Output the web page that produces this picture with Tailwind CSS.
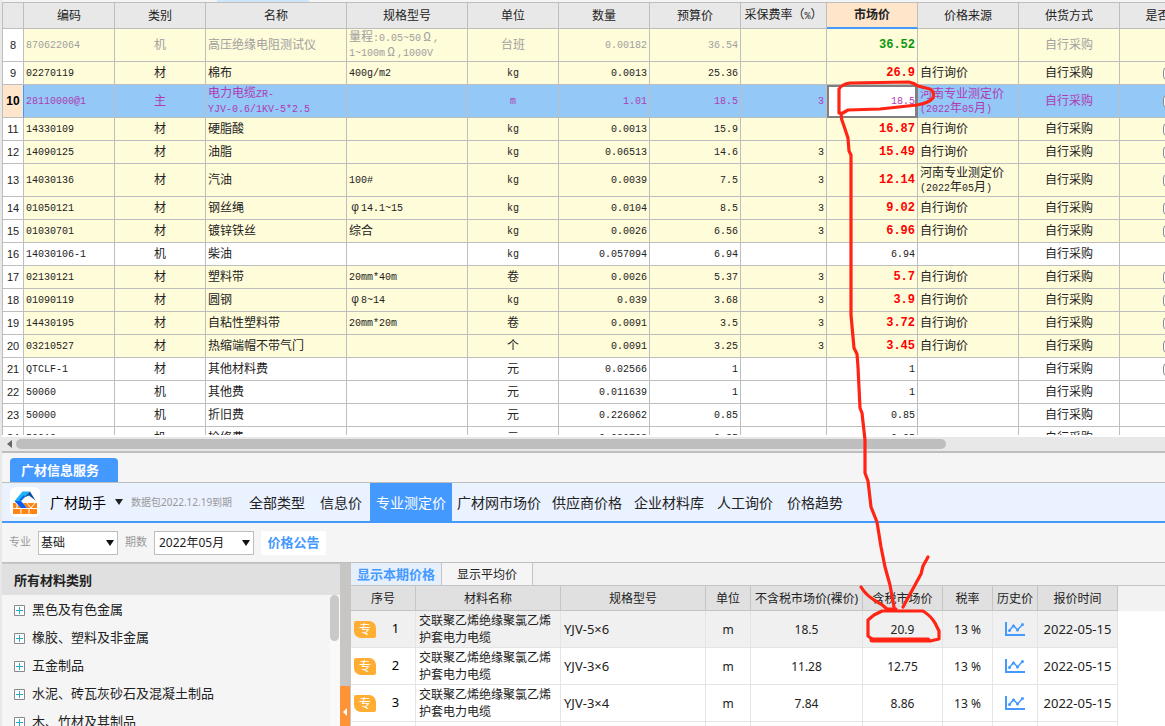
<!DOCTYPE html>
<html lang="zh-CN">
<head>
<meta charset="utf-8">
<title>广材信息服务</title>
<script src="https://cdn.jsdelivr.net/npm/@tailwindcss/browser@4"></script>
</head>
<body class="relative flex h-screen flex-col overflow-hidden bg-[#e8e8e8] pl-[2px] font-['Noto_Sans','Noto_Sans_CJK_SC',sans-serif] text-[#222]">

<div class="flex h-[2px] shrink-0 bg-[#f4f4f4]"><span class="ml-[215px] w-[92px] bg-[#cce6fb]"></span></div>

<main class="h-[433px] shrink-0 overflow-hidden bg-white font-['Liberation_Mono','Noto_Sans_CJK_SC',monospace] text-[12px] leading-[14px]">
  <table class="w-[1218px] table-fixed border-separate border-spacing-0 border-l border-t border-[#bebebe]">
    <colgroup>
      <col class="w-[21px]"><col class="w-[91px]"><col class="w-[91px]"><col class="w-[141px]"><col class="w-[121px]"><col class="w-[91px]"><col class="w-[91px]"><col class="w-[91px]"><col class="w-[86px]"><col class="w-[91px]"><col class="w-[101px]"><col class="w-[101px]"><col class="w-[100px]">
    </colgroup>
    <thead><tr id="head" class="h-[26px] bg-[#e8e8e8]"></tr></thead>
    <tbody id="grid"></tbody>
  </table>
</main>

<div class="flex h-[16px] shrink-0 items-center border-t-2 border-white bg-[#e8e8e8]">
  <button aria-label="向左滚动" class="flex w-[14px] justify-center"><svg class="h-[8px] w-[5px]" viewBox="0 0 5 8"><path d="M5 0v8L0 4z" fill="#666"/></svg></button>
  <span class="h-[10px] w-[80%] rounded-full bg-[#bebebe]"></span>
</div>

<section class="flex min-h-0 flex-1 flex-col border-t-2 border-[#bebebe] bg-[#f5f5f5]">
  <div class="flex h-[30px] shrink-0 items-end border-b border-[#bebebe] pl-2">
    <button class="h-6 w-[108px] rounded-t-sm bg-[#4499ff] pr-2 text-center text-[13px] font-bold leading-6 text-white">广材信息服务</button>
  </div>

  <nav class="flex h-10 shrink-0 items-center border-b-2 border-[#4499ff] bg-[#eaf1ff] pl-2 text-[14px]">
    <span class="flex h-[30px] w-[30px] items-center justify-center rounded-md bg-white">
      <svg class="h-[26px] w-[26px]" viewBox="0 0 26 26">
        <path d="M1 14h24v11H1z" fill="#ff8412"/>
        <path d="M1 19.500h24M9 19.500V25M17 19.500V25M5 14v5.500M15 14l4 5 4-5" stroke="#fff" fill="none"/>
        <path d="M10 2h10l5 9-1 2-6-6-5 1-4 4 6 7-4 1-9-7z" fill="#fff"/>
        <path d="M10.500 2.500H18L9 12H2.500z" fill="#1fb2fa"/>
        <path d="M2.500 12H9l6 7H9z" fill="#0a5df0"/>
        <path d="M12 8.500l6-6 5.500 9-6.500-5z" fill="#0b4f9c"/>
        <path d="M7 11l5-5 1 2-4 4z" fill="#0c6fd8"/>
      </svg>
    </span>
    <button class="ml-[10px] flex items-center gap-[9px] whitespace-nowrap text-black">广材助手<svg class="h-[6px] w-[8px]" viewBox="0 0 8 6"><path d="M0 0h8L4 6z" fill="#222"/></svg></button>
    <span class="ml-2 w-[116px] whitespace-nowrap text-[10px] text-[#999]">数据包2022.12.19到期</span>
    <div class="flex h-full items-center whitespace-nowrap">
      <a href="#" class="w-[71px] pl-[2px]">全部类型</a>
      <a href="#" class="w-[52px] pl-[2px]">信息价</a>
      <a href="#" class="flex h-full w-[82px] items-center justify-center bg-[#4499ff] text-white">专业测定价</a>
      <a href="#" class="ml-[5px]">广材网市场价</a>
      <a href="#" class="ml-[11px]">供应商价格</a>
      <a href="#" class="ml-3">企业材料库</a>
      <a href="#" class="ml-[13px]">人工询价</a>
      <a href="#" class="ml-[14px]">价格趋势</a>
    </div>
  </nav>

  <form class="flex h-10 shrink-0 items-center border-b border-[#bebebe] pl-[7px] text-[12px]">
    <label for="major" class="text-[11px] text-[#999]">专业</label>
    <div class="relative ml-[7px]">
      <select id="major" class="h-6 w-20 appearance-none border border-[#bebebe] bg-white pl-[2px] text-[12px] leading-4"><option>基础</option></select>
      <svg class="pointer-events-none absolute right-1 top-[9px] h-[6px] w-[8px]" viewBox="0 0 8 6"><path d="M0 0h8L4 6z" fill="#111"/></svg>
    </div>
    <label for="period" class="ml-[7px] text-[11px] text-[#999]">期数</label>
    <div class="relative ml-[7px]">
      <select id="period" class="h-6 w-[100px] appearance-none border border-[#bebebe] bg-white pl-1 text-[12px] leading-4"><option>2022年05月</option></select>
      <svg class="pointer-events-none absolute right-1 top-[9px] h-[6px] w-[8px]" viewBox="0 0 8 6"><path d="M0 0h8L4 6z" fill="#111"/></svg>
    </div>
    <button type="button" class="ml-[7px] h-6 w-[65px] bg-white text-[13px] font-bold text-[#4499ff]">价格公告</button>
  </form>

  <div class="flex min-h-0 flex-1">
    <aside class="flex w-[338px] shrink-0 flex-col overflow-hidden">
      <h2 class="h-8 shrink-0 border-t border-[#c8c8c8] bg-[#e0e0e0] pl-3 text-[13px] font-bold leading-8">所有材料类别</h2>
      <div class="flex min-h-0 flex-1 justify-between">
        <ul id="tree" class="pl-3 pt-px text-[13px]"></ul>
        <span class="w-[10px] bg-[#f9f9f9]"><span class="block h-[46px] w-[9px] rounded-full bg-[#c9c9c9]"></span></span>
      </div>
    </aside>
    <div class="w-[11px] shrink-0 overflow-hidden bg-[#c8c6c4] pt-[123px]">
      <button aria-label="收起" class="flex h-[60px] w-[10px] items-center justify-center bg-[#ff9436] pb-2"><svg class="h-[8px] w-[4px]" viewBox="0 0 4 8"><path d="M4 0v8L0 4z" fill="#fff"/></svg></button>
    </div>
    <div class="min-w-0 flex-1 overflow-hidden bg-white text-[12px]">
      <div class="flex h-[23px] border-b border-[#c4c4c4] bg-[#f1f1f1]">
        <button class="w-[91px] border-r border-[#c4c4c4] bg-[#e6f0fd] text-[13px] font-bold leading-5 text-[#4499ff]">显示本期价格</button>
        <button class="w-[91px] border-r border-[#c4c4c4] bg-[#f5f5f5] pt-[2px] leading-5">显示平均价</button>
      </div>
      <div class="bg-[linear-gradient(#f2f2f2_25px,#fff_25px)]">
        <table class="w-[767px] table-fixed border-separate border-spacing-0 text-center">
          <colgroup><col class="w-[65px]"><col class="w-[145px]"><col class="w-[145px]"><col class="w-[45px]"><col class="w-[112px]"><col class="w-[80px]"><col class="w-[50px]"><col class="w-[45px]"><col class="w-[80px]"></colgroup>
          <thead><tr id="priceHead" class="h-[25px] bg-[#e0e0e0]"></tr></thead>
          <tbody id="prices"></tbody>
        </table>
      </div>
    </div>
  </div>
</section>

<svg class="pointer-events-none absolute left-0 top-0 h-[726px] w-[1165px]" viewBox="0 0 1165 726" fill="none" stroke="#ff2414" stroke-width="3.200" stroke-linecap="round" stroke-linejoin="round">
  <path d="M839 113V89Q842 84 850 83L909 82Q914 83 918 86L930 89Q935 92 933 98Q929 103 917 105L880 109L848 110L841 114"/>
  <path d="M841 113Q841 120 844 126L848 138L849 151L851 155L851 315L854 348L857 354L858 367L860 408L862 413L865 440L865 473L868 481L871 507L877 522L881 547L885 567L890 585L894 607"/>
  <path d="M861 587Q866 595 874 600Q882 604 887 609L896 609M928 557L923 566L921 574L903 607"/>
  <path d="M868 620V636L872 639M868 620L874 615L882 611H923Q931 616 935 623L939 631V639L930 641"/>
  <path d="M872 640H928" stroke-width="5"/>
</svg>

<script>
// Latin runs are set at half the width of a Chinese character, Greek letters at the full width.
const mix = s => s.replace(/[!-~ ]+/g, m => `<span class="text-[10px]">${m}</span>`)
  .replace(/[φΩ]/g, m => `<span class="inline-block w-3 text-center">${m}</span>`);

document.getElementById('head').innerHTML =
  ['', '编码', '类别', '名称', '规格型号', '单位', '数量', '预算价', '采保费率（%）', '市场价', '价格来源', '供货方式', '是否暂估'].map(t =>
    t === '市场价'
      ? `<th class="border-b-2 border-r border-b-[#4499ff] border-r-[#bebebe] bg-[#ffe6cb] px-0 pb-0 pt-[2px] font-bold">${t}</th>`
      : `<th class="whitespace-nowrap border-b border-r border-[#bebebe] px-0 pb-0 pt-[2px] font-normal">${mix(t)}</th>`).join('');

// number, code, kind, name, spec, unit, quantity, budget, fee, market, source, style
const rows = [
  [8, '870622064', '机', '高压绝缘电阻测试仪', '量程:0.05~50Ω,<br>1~100mΩ,1000V', '台班', '0.00182', '36.54', '', '36.52', '', 'off'],
  [9, '02270119', '材', '棉布', '400g/m2', 'kg', '0.0013', '25.36', '', '26.9', '自行询价', 'y'],
  [10, '28110000@1', '主', '电力电缆ZR-<br>YJV-0.6/1KV-5*2.5', '', 'm', '1.01', '18.5', '3', '18.5', '河南专业测定价<br>(2022年05月)', 'sel'],
  [11, '14330109', '材', '硬脂酸', '', 'kg', '0.0013', '15.9', '', '16.87', '自行询价', 'y'],
  [12, '14090125', '材', '油脂', '', 'kg', '0.06513', '14.6', '3', '15.49', '自行询价', 'y'],
  [13, '14030136', '材', '汽油', '100#', 'kg', '0.0039', '7.5', '3', '12.14', '河南专业测定价<br>(2022年05月)', 'y'],
  [14, '01050121', '材', '钢丝绳', 'φ14.1~15', 'kg', '0.0104', '8.5', '3', '9.02', '自行询价', 'y'],
  [15, '01030701', '材', '镀锌铁丝', '综合', 'kg', '0.0026', '6.56', '3', '6.96', '自行询价', 'y'],
  [16, '14030106-1', '机', '柴油', '', 'kg', '0.057094', '6.94', '', '6.94', '', 'w'],
  [17, '02130121', '材', '塑料带', '20mm*40m', '卷', '0.0026', '5.37', '3', '5.7', '自行询价', 'y'],
  [18, '01090119', '材', '圆钢', 'φ8~14', 'kg', '0.039', '3.68', '3', '3.9', '自行询价', 'y'],
  [19, '14430195', '材', '自粘性塑料带', '20mm*20m', '卷', '0.0091', '3.5', '3', '3.72', '自行询价', 'y'],
  [20, '03210527', '材', '热缩端帽不带气门', '', '个', '0.0091', '3.25', '3', '3.45', '自行询价', 'y'],
  [21, 'QTCLF-1', '材', '其他材料费', '', '元', '0.02566', '1', '', '1', '', 'wc'],
  [22, '50060', '机', '其他费', '', '元', '0.011639', '1', '', '1', '', 'w'],
  [23, '50000', '机', '折旧费', '', '元', '0.226062', '0.85', '', '0.85', '', 'w'],
  [24, '50010', '机', '检修费', '', '元', '0.030703', '0.85', '', '0.85', '', 'w'],
];
const look = {
  off: 'bg-[#fffcd9] text-[#a0a0a0]', y: 'bg-[#fffcd9]', sel: 'bg-[#93c8f7] text-[#b03cb4]', w: 'bg-white', wc: 'bg-white',
};
const lines = s => s.split('<br>').map(mix).join('<br>');
const left = s => `<td class="${/[一-龥]/.test(s) ? 'whitespace-nowrap border-b border-r border-[#bebebe] pb-0 pl-[2px] pr-0 pt-[2px]' : 'whitespace-nowrap border-b border-r border-[#bebebe] py-0 pl-[2px] pr-0'}">${lines(s)}</td>`;
const mid = s => `<td class="${/[一-龥]/.test(s) ? 'border-b border-r border-[#bebebe] px-0 pb-0 pt-[2px] text-center' : 'border-b border-r border-[#bebebe] p-0 text-center'}">${lines(s)}</td>`;
const right = s => `<td class="border-b border-r border-[#bebebe] py-0 pl-0 pr-[2px] text-right">${lines(s)}</td>`;
document.getElementById('grid').innerHTML = rows.map(r => {
  const [n, code, kind, name, spec, unit, qty, budget, fee, market, source, st] = r;
  const tall = (name + spec + source).includes('<br>');
  const idx = st === 'sel'
    ? `<td class="border-b border-r border-b-[#bebebe] border-r-[#4499ff] bg-[#ffe6cb] p-0 text-center font-['Liberation_Sans'] font-bold text-black">${n}</td>`
    : `<td class="border-b border-r border-[#bebebe] bg-white p-0 text-center font-['Liberation_Sans'] text-[11px] text-[#222]">${n}</td>`;
  let price;
  if (st === 'sel') price = `<td class="border-r border-[#808080] p-0"><input aria-label="市场价" value="${market}" class="block h-[33px] w-full border-2 border-[#808080] bg-white pr-0 text-right text-[10px]"></td>`;
  else if (st[0] === 'w') price = right(market);
  else price = `<td class="${st === 'off' ? 'border-b border-r border-[#bebebe] py-0 pl-0 pr-[2px] text-right font-bold text-[#0a960a]' : 'border-b border-r border-[#bebebe] py-0 pl-0 pr-[2px] text-right font-bold text-[#ff0000]'}">${market}</td>`;
  const box = st === 'w' || st === 'off' ? '' : '<input type="checkbox" aria-label="是否暂估" class="mx-auto block h-[13px] w-[13px] appearance-none rounded-sm border border-[#888] bg-white">';
  return `<tr class="${(tall ? 'h-[33px] ' : 'h-[23px] ') + look[st]}">${idx}${left(code)}${mid(kind)}${left(name)}${left(spec)}${mid(unit)}${right(qty)}${right(budget)}${right(fee)}${price}${left(source)}${mid('自行采购')}<td class="border-b border-r border-[#bebebe] p-0">${box}</td></tr>`;
}).join('');

document.getElementById('tree').innerHTML = ['黑色及有色金属', '橡胶、塑料及非金属', '五金制品', '水泥、砖瓦灰砂石及混凝土制品', '木、竹材及其制品'].map(t =>
  `<li><button class="flex h-7 items-center gap-[7px] whitespace-nowrap"><svg class="h-[11px] w-[11px]" viewBox="0 0 11 11" fill="none"><path d="M.5.5h10v10H.5z" stroke="#888" fill="#fff"/><path d="M2 5.500h7M5.500 2v7" stroke="#29a9d8"/></svg>${t}</button></li>`).join('');

document.getElementById('priceHead').innerHTML = ['序号', '材料名称', '规格型号', '单位', '不含税市场价(裸价)', '含税市场价', '税率', '历史价', '报价时间'].map(t =>
  `<th class="whitespace-nowrap border-b border-r border-[#c4c4c4] px-0 pb-0 pt-[2px] font-normal leading-5">${t}</th>`).join('');
const chart = '<button aria-label="历史价" class="block"><svg class="mx-3 h-[15px] w-[20px]" viewBox="0 0 20 15" fill="none" stroke="#4499ff"><path d="M1 0v13h19" stroke-width="2"/><path d="M4.500 8.500l4-5 4 4.500 5-5.500" stroke-width="1.500"/><g fill="#4499ff" stroke="none"><circle cx="4.500" cy="8.500" r="1.500"/><circle cx="8.500" cy="4" r="1.500"/><circle cx="12.500" cy="8" r="1.500"/><circle cx="17.500" cy="2.500" r="1.500"/></g></svg></button>';
const cell = (s) => `<td class="border-b border-r border-[#e4e4e4] px-0 pb-0 pt-[2px]">${s}</td>`;
document.getElementById('prices').innerHTML = [
  [1, 'YJV-5×6', '18.5', '20.9'], [2, 'YJV-3×6', '11.28', '12.75'], [3, 'YJV-3×4', '7.84', '8.86'], [4, '', '', ''],
].map(([n, spec, net, gross]) => `<tr class="${n === 1 ? 'h-[37px] bg-[#f0f0f0]' : 'h-[37px] bg-white'}">
  <td class="border-b border-r border-[#e4e4e4] py-0 pl-[3px] pr-0">${spec ? `<span class="flex items-center"><span class="h-[17px] w-[22px] rounded-bl-[7px] rounded-tr-[7px] rounded-br-[2px] rounded-tl-[2px] bg-[#ffad33] text-center leading-[17px] text-white">专</span><span class="w-[39px] text-[13px] text-black">${n}</span></span>` : ''}</td>
  <td class="border-b border-r border-[#e4e4e4] py-0 pl-[3px] pr-0 text-left leading-[17px]">${spec ? '交联聚乙烯绝缘聚氯乙烯<br>护套电力电缆' : ''}</td>
  <td class="border-b border-r border-[#e4e4e4] pb-0 pl-[3px] pr-0 pt-[2px] text-left text-[13px]">${spec}</td>
  ${cell(spec && 'm')}${cell(net)}${cell(gross)}${cell(spec && '13 %')}<td class="border-b border-r border-[#e4e4e4] p-0">${spec ? chart : ''}</td><td class="border-b border-r border-[#e4e4e4] px-0 pb-0 pt-[2px] text-[13px]">${spec && '2022-05-15'}</td></tr>`).join('');
</script>
</body>
</html>
